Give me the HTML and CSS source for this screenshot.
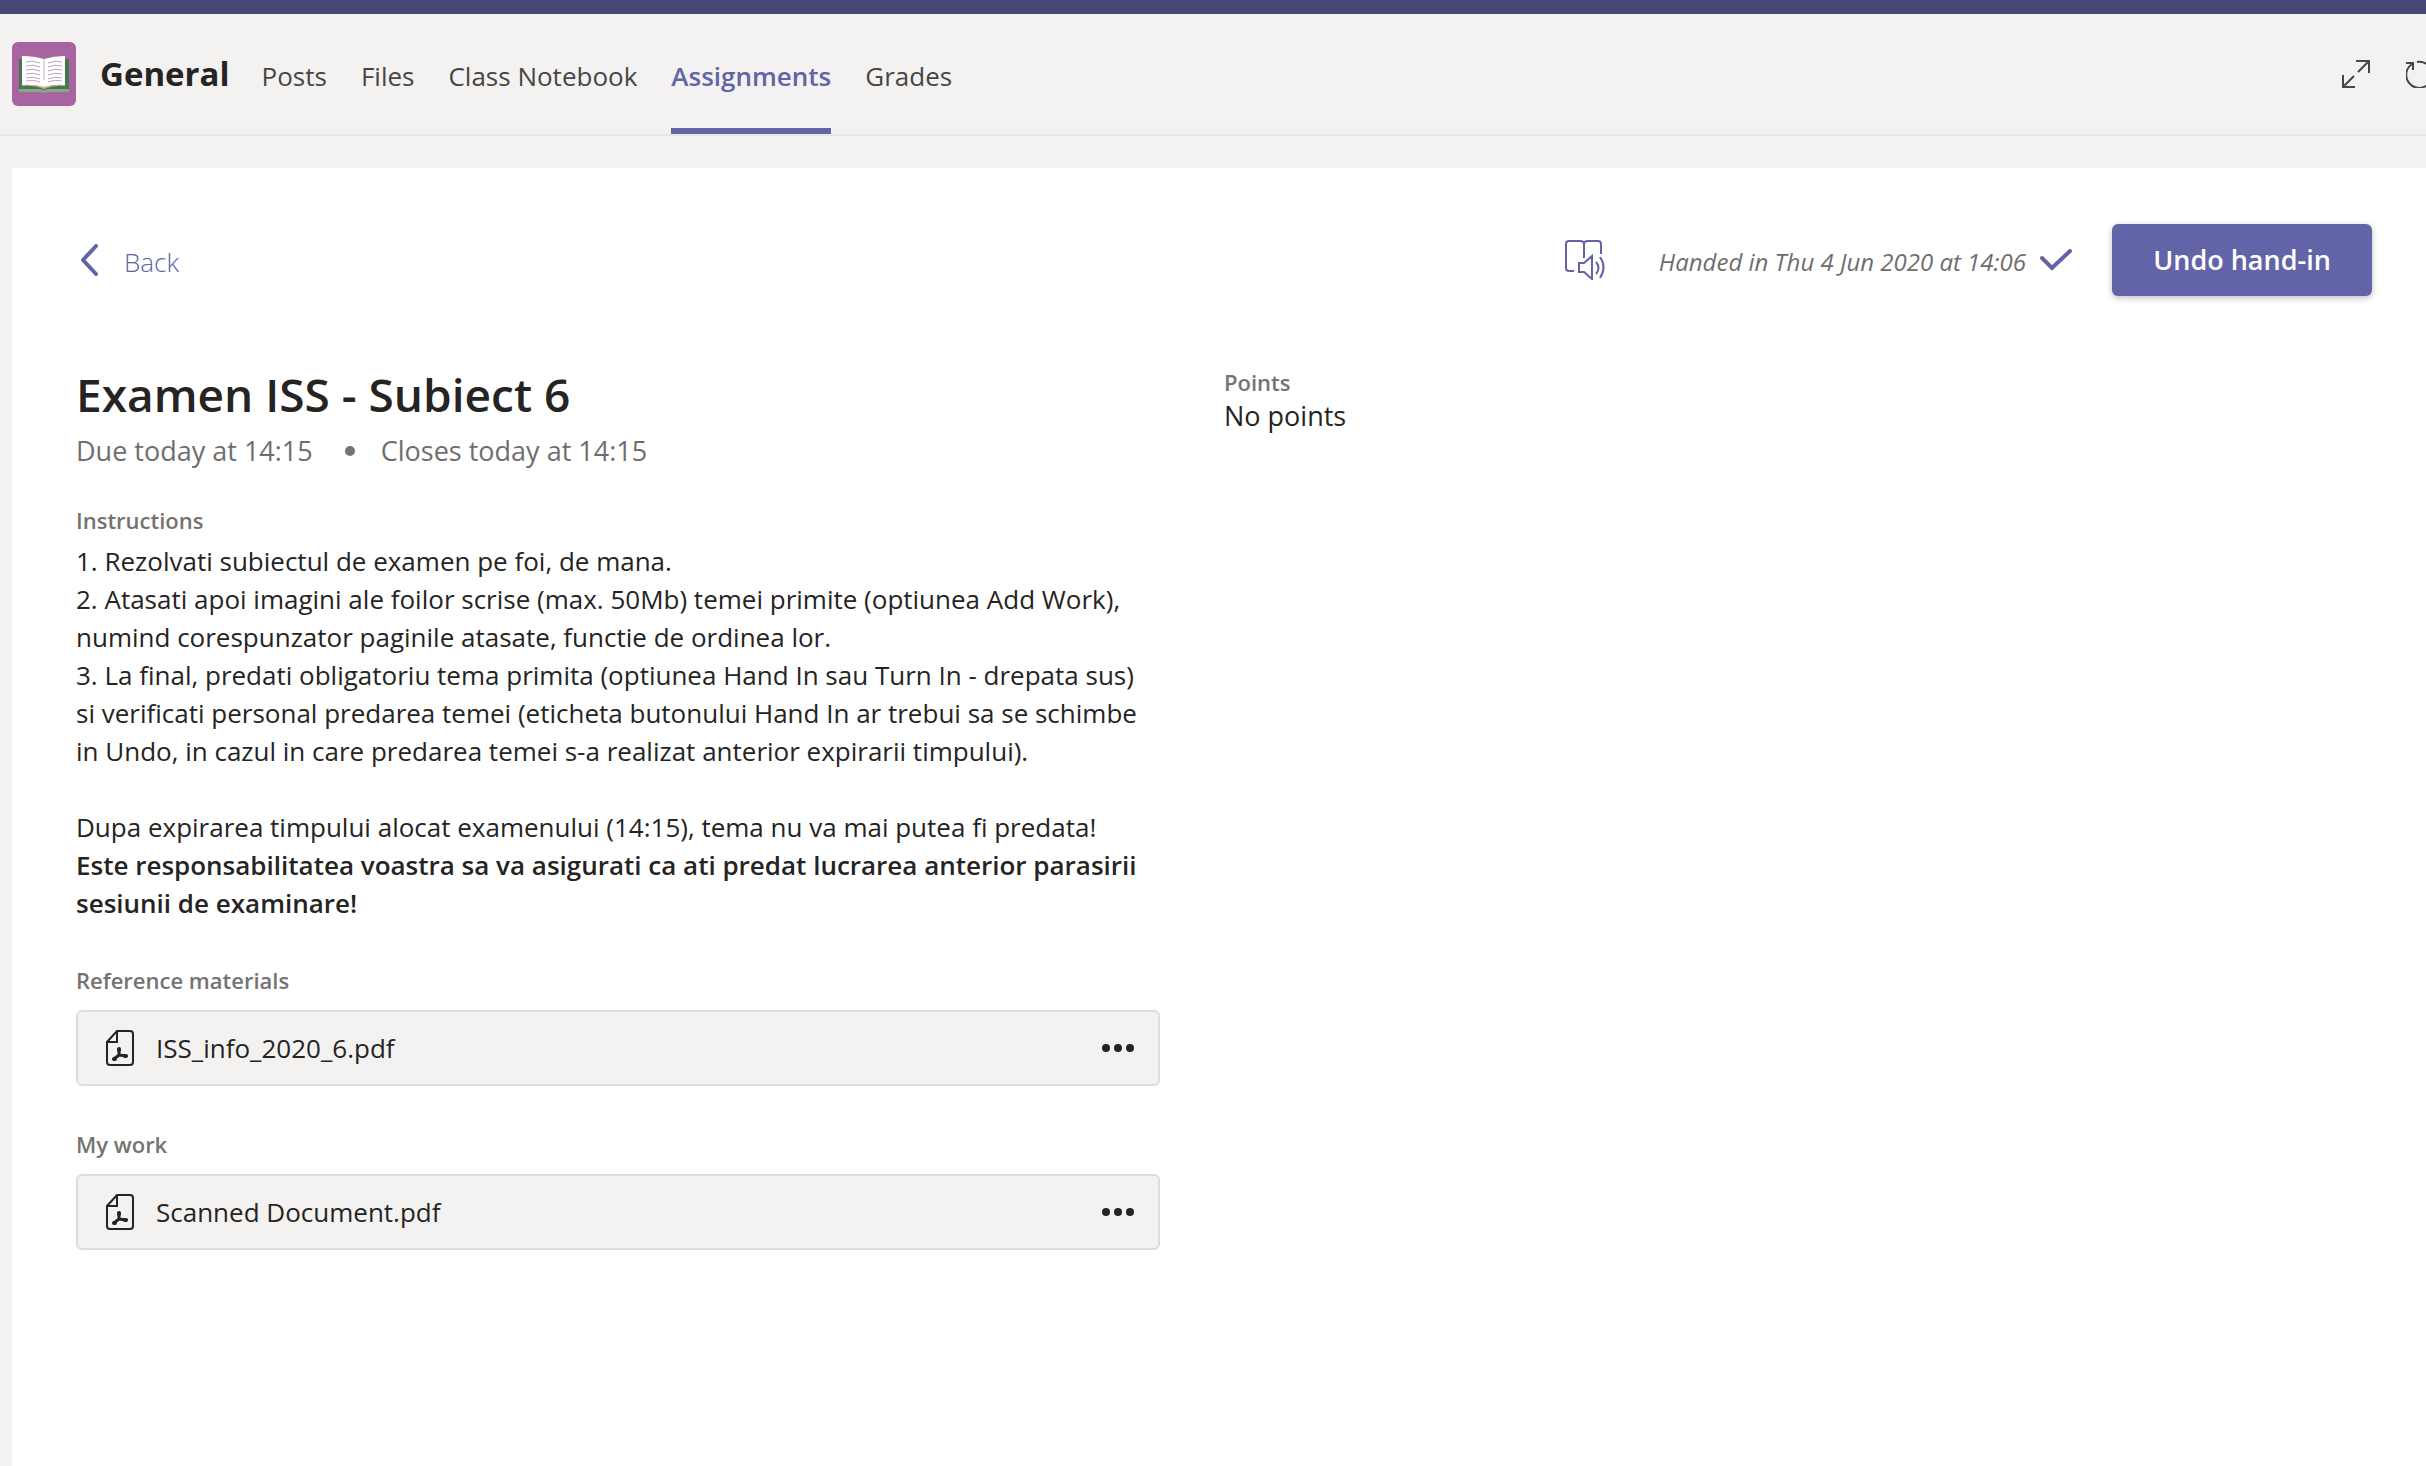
FILE: index.html
```html
<!DOCTYPE html>
<html lang="en">
<head>
<meta charset="utf-8">
<title>General - Assignments</title>
<link rel="stylesheet" href="styles.css">
</head>
<body>
<div class="top-bar"></div>
<header class="channel-header">
  <svg class="class-logo" viewBox="0 0 64 64" aria-hidden="true">
    <rect width="64" height="64" rx="6" fill="#a864a1"/>
    <path d="M7 47h50v3H35q-3 2-6 0H7z" fill="#86a68d"/>
    <path d="M7 17h50v30H35q-3 2-6 0H7z" fill="#42794a"/>
    <path d="M10 43q12-1 22 2 10-3 21-2v1q-11-1-21 3-10-4-22-3z" fill="#d9a3a0"/>
    <path d="M10 14q12 0 22 3 10-3 21-3v29q-11-1-21 2-10-3-22-2z" fill="#fff"/>
    <path d="M32 17v21" stroke="#c9b4d0" stroke-width="1"/>
    <path d="M14 20q7-2 14 1m-14 3q7-2 14 1m-14 3q7-2 14 1m-14 3q7-2 14 1m-14 3q7-2 14 1m-14 2q7-2 14 1M50 20q-7-2-14 1m14 3q-7-2-14 1m14 3q-7-2-14 1m14 3q-7-2-14 1m14 3q-7-2-14 1m14 2q-7-2-14 1" fill="none" stroke="#bfa0bf" stroke-width="1"/>
  </svg>
  <h1 class="channel-name">General</h1>
  <nav class="tabs">
    <a class="tab" href="#">Posts</a>
    <a class="tab" href="#">Files</a>
    <a class="tab" href="#">Class Notebook</a>
    <a class="tab tab-active" href="#" aria-current="page">Assignments</a>
    <a class="tab" href="#">Grades</a>
  </nav>
  <div class="header-actions">
    <button class="icon-button" type="button" aria-label="Expand">
      <svg width="28" height="28" viewBox="0 0 28 28"><path d="M14 1h13v12M27 1L16 12M1 15v12h12M1 27l11-11" /></svg>
    </button>
    <button class="icon-button" type="button" aria-label="Reload">
      <svg width="28" height="28" viewBox="0 0 28 28"><path d="M11 2a13 13 0 1 1-5 2M0 3h7v7" /></svg>
    </button>
  </div>
</header>
<main class="panel">
  <div class="toolbar">
    <a class="back" href="#">
      <svg width="18" height="32" viewBox="0 0 18 32" aria-hidden="true"><path d="M16 2L3 16l13 14"/></svg>
      <span>Back</span>
    </a>
    <div class="toolbar-right">
      <button class="icon-button reader" type="button" aria-label="Immersive reader">
        <svg width="40" height="40" viewBox="0 0 40 40"><path d="M9 31H4q-3 0-3-3V4q0-3 3-3h11q4 0 4 3v14M19 4q0-3 4-3h10q3 0 3 3v10M14 23h5l8-7v23l-8-7h-5zM31 22q5 6 0 12M35 17q7 10 0 21"/></svg>
      </button>
      <p class="status"><span>Handed in Thu 4 Jun 2020 at 14:06</span>
        <svg width="32" height="22" viewBox="0 0 32 22" aria-hidden="true"><path d="M2 9l10 10L30 2"/></svg>
      </p>
      <button class="primary" type="button">Undo hand-in</button>
    </div>
  </div>
  <div class="content">
    <div class="details">
      <h2 class="title">Examen ISS - Subiect 6</h2>
      <p class="dates"><span>Due today at 14:15</span><span class="dot"></span><span>Closes today at 14:15</span></p>
      <section class="section section-first">
        <h3 class="label">Instructions</h3>
        <div class="instructions">
          <p>1. Rezolvati subiectul de examen pe foi, de mana.</p>
          <p>2. Atasati apoi imagini ale foilor scrise (max. 50Mb) temei primite (optiunea Add Work), numind corespunzator paginile atasate, functie de ordinea lor.</p>
          <p>3. La final, predati obligatoriu tema primita (optiunea Hand In sau Turn In - drepata sus) si verificati personal predarea temei (eticheta butonului Hand In ar trebui sa se schimbe in Undo, in cazul in care predarea temei s-a realizat anterior expirarii timpului).</p>
          <p><br></p>
          <p>Dupa expirarea timpului alocat examenului (14:15), tema nu va mai putea fi predata!</p>
          <p><strong>Este responsabilitatea voastra sa va asigurati ca ati predat lucrarea anterior parasirii sesiunii de examinare!</strong></p>
        </div>
      </section>
      <section class="section">
        <h3 class="label">Reference materials</h3>
        <div class="file">
          <svg class="file-icon" width="28" height="36" viewBox="0 0 28 36" aria-hidden="true"><path d="M11 1h13q3 0 3 3v28q0 3-3 3H4q-3 0-3-3V12zM11 1v11H1"/><path class="file-mark" d="M13 19v6l-5 4m5-4l7 1"/><path class="file-lobes" d="M13 19v1M8 29h1M19 26h1"/></svg>
          <a class="file-name" href="#">ISS_info_2020_6.pdf</a>
          <button class="more" type="button" aria-label="More options"><svg width="32" height="8" viewBox="0 0 32 8"><circle cx="4" cy="4" r="4"/><circle cx="16" cy="4" r="4"/><circle cx="28" cy="4" r="4"/></svg></button>
        </div>
      </section>
      <section class="section">
        <h3 class="label">My work</h3>
        <div class="file">
          <svg class="file-icon" width="28" height="36" viewBox="0 0 28 36" aria-hidden="true"><path d="M11 1h13q3 0 3 3v28q0 3-3 3H4q-3 0-3-3V12zM11 1v11H1"/><path class="file-mark" d="M13 19v6l-5 4m5-4l7 1"/><path class="file-lobes" d="M13 19v1M8 29h1M19 26h1"/></svg>
          <a class="file-name" href="#">Scanned Document.pdf</a>
          <button class="more" type="button" aria-label="More options"><svg width="32" height="8" viewBox="0 0 32 8"><circle cx="4" cy="4" r="4"/><circle cx="16" cy="4" r="4"/><circle cx="28" cy="4" r="4"/></svg></button>
        </div>
      </section>
    </div>
    <aside class="points">
      <h3 class="label">Points</h3>
      <p class="points-value">No points</p>
    </aside>
  </div>
</main>
</body>
</html>
```
FILE: styles.css
```css
* { box-sizing: border-box; }
body {
  margin: 0;
  min-height: 100vh;
  display: flex;
  flex-direction: column;
  background: #f3f2f1;
  color: #252423;
  font-family: "Open Sans", "Noto Sans", sans-serif;
  font-size: 26px;
  line-height: 38px;
  overflow-x: hidden;
}
h1, h2, h3, p { margin: 0; }
a { color: inherit; text-decoration: none; }
button { font: inherit; border: 0; padding: 0; background: none; cursor: pointer; }
svg { display: block; flex: none; }

.top-bar { height: 14px; background: #464775; }
.channel-header {
  display: flex;
  align-items: center;
  height: 122px;
  padding-left: 12px;
  border-bottom: 2px solid #e8e7e6;
}
.class-logo { width: 64px; height: 64px; }
.channel-name { margin-left: 24px; font-size: 33px; font-weight: 700; }
.tabs { display: flex; align-self: stretch; gap: 34px; margin-left: 32px; }
.tab {
  display: flex;
  align-items: center;
  padding-top: 10px;
  border-bottom: 6px solid transparent;
  color: #484644;
  white-space: nowrap;
}
.tab-active { color: #6264a7; border-color: #6264a7; font-weight: 600; }
.header-actions { display: flex; gap: 36px; margin-left: auto; margin-right: -8px; }
.icon-button svg { fill: none; stroke: #484644; stroke-width: 2; }

.panel { flex: 1; margin: 32px 0 0 12px; padding: 56px 54px 56px 64px; background: #fff; }
.toolbar { display: flex; justify-content: space-between; align-items: center; }
.back { display: flex; align-items: center; gap: 26px; padding-left: 4px; color: #6264a7; font-weight: 300; }
.back span, .status span { padding-top: 4px; }
.back svg { fill: none; stroke: #6264a7; stroke-width: 4; stroke-linecap: round; stroke-linejoin: round; }
.toolbar-right { display: flex; align-items: center; }
.icon-button.reader svg { stroke: #6264a7; }
.status { display: flex; align-items: center; gap: 14px; margin: 0 40px 0 54px; color: #6f6e6d; font-size: 24px; font-style: italic; }
.status svg { fill: none; stroke: #6264a7; stroke-width: 4; stroke-linecap: round; }
.primary {
  width: 260px;
  height: 72px;
  border-radius: 6px;
  background: #6264a7;
  color: #fff;
  font-size: 27px;
  font-weight: 600;
  box-shadow: 0 2px 6px rgba(0, 0, 0, .25);
}

.content { display: flex; gap: 64px; margin-top: 68px; }
.details { width: 1084px; }
.title { font-size: 46px; font-weight: 600; line-height: 60px; }
.dates { display: flex; align-items: center; margin-top: 8px; color: #6f6e6d; font-size: 27px; }
.dot { width: 10px; height: 10px; margin: 0 26px 0 32px; border-radius: 50%; background: #747372; }
.section { margin-top: 40px; }
.section-first { margin-top: 32px; }
.label { color: #747372; font-size: 22px; font-weight: 600; line-height: 36px; }
.instructions { margin-top: 4px; padding-right: 8px; }
.instructions strong { font-weight: 600; }
.file {
  display: flex;
  align-items: center;
  height: 76px;
  margin-top: 12px;
  padding: 0 24px 0 28px;
  border: 2px solid #dcdde2;
  border-radius: 6px;
  background: #f3f2f1;
}
.file-icon { fill: none; stroke: #252423; stroke-width: 2; }
.file-mark { stroke-width: 3; stroke-linecap: round; }
.file-lobes { stroke-width: 4; stroke-linecap: round; }
.file-name { flex: 1; margin-left: 22px; }
.more svg { fill: #252423; }
.points-value { font-size: 27px; line-height: 32px; }
```
